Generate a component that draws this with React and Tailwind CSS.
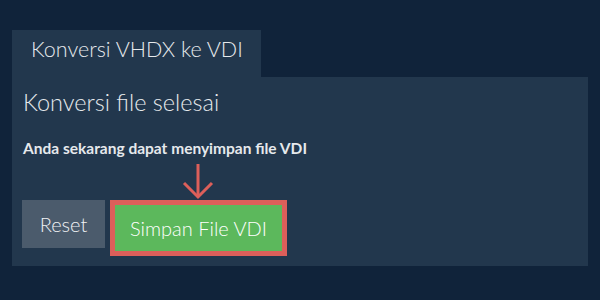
export default function App() {
  return (
    <div className="w-[600px] h-[300px] bg-[#10233a] pt-[30px] px-[12px] font-['Lato','Liberation_Sans',sans-serif] text-[#e6e9ec]">
      <div className="w-[249px] h-[47px] bg-[#22374d] pt-[5px] pl-[19px] text-[21.5px] leading-[28px] font-light">
        Konversi VHDX ke VDI
      </div>
      <div className="h-[189px] bg-[#22374d] pt-[11px] px-[10px] pb-[10px]">
        <h1 className="pl-[1px] text-[23.5px] leading-[28px] font-light">Konversi file selesai</h1>
        <p className="mt-[22px] pl-[1px] text-[15.5px] leading-[20px] font-bold">
          Anda sekarang dapat menyimpan file VDI
        </p>
        <div className="mt-[42px] flex items-start gap-[5px]">
          <button type="button" className="w-[83px] h-[48px] bg-[#4b5b6c] text-[20px] leading-[24px] font-light text-[#f0f2f4]">
            Reset
          </button>
          <div className="relative border-[5px] border-[#dc5f5a]">
            <svg
              className="absolute left-[67px] top-[-42px]"
              width="32"
              height="37"
              viewBox="0 0 32 37"
              fill="none"
              stroke="#dc5f5a"
              strokeWidth="3"
            >
              <path d="M16 1 V34" />
              <path d="M2 20 L16 34 L30 20" />
            </svg>
            <button type="button" className="w-[167px] h-[46px] bg-[#5cb85c] text-[20px] leading-[24px] font-light text-white">
              Simpan File VDI
            </button>
          </div>
        </div>
      </div>
    </div>
  );
}
